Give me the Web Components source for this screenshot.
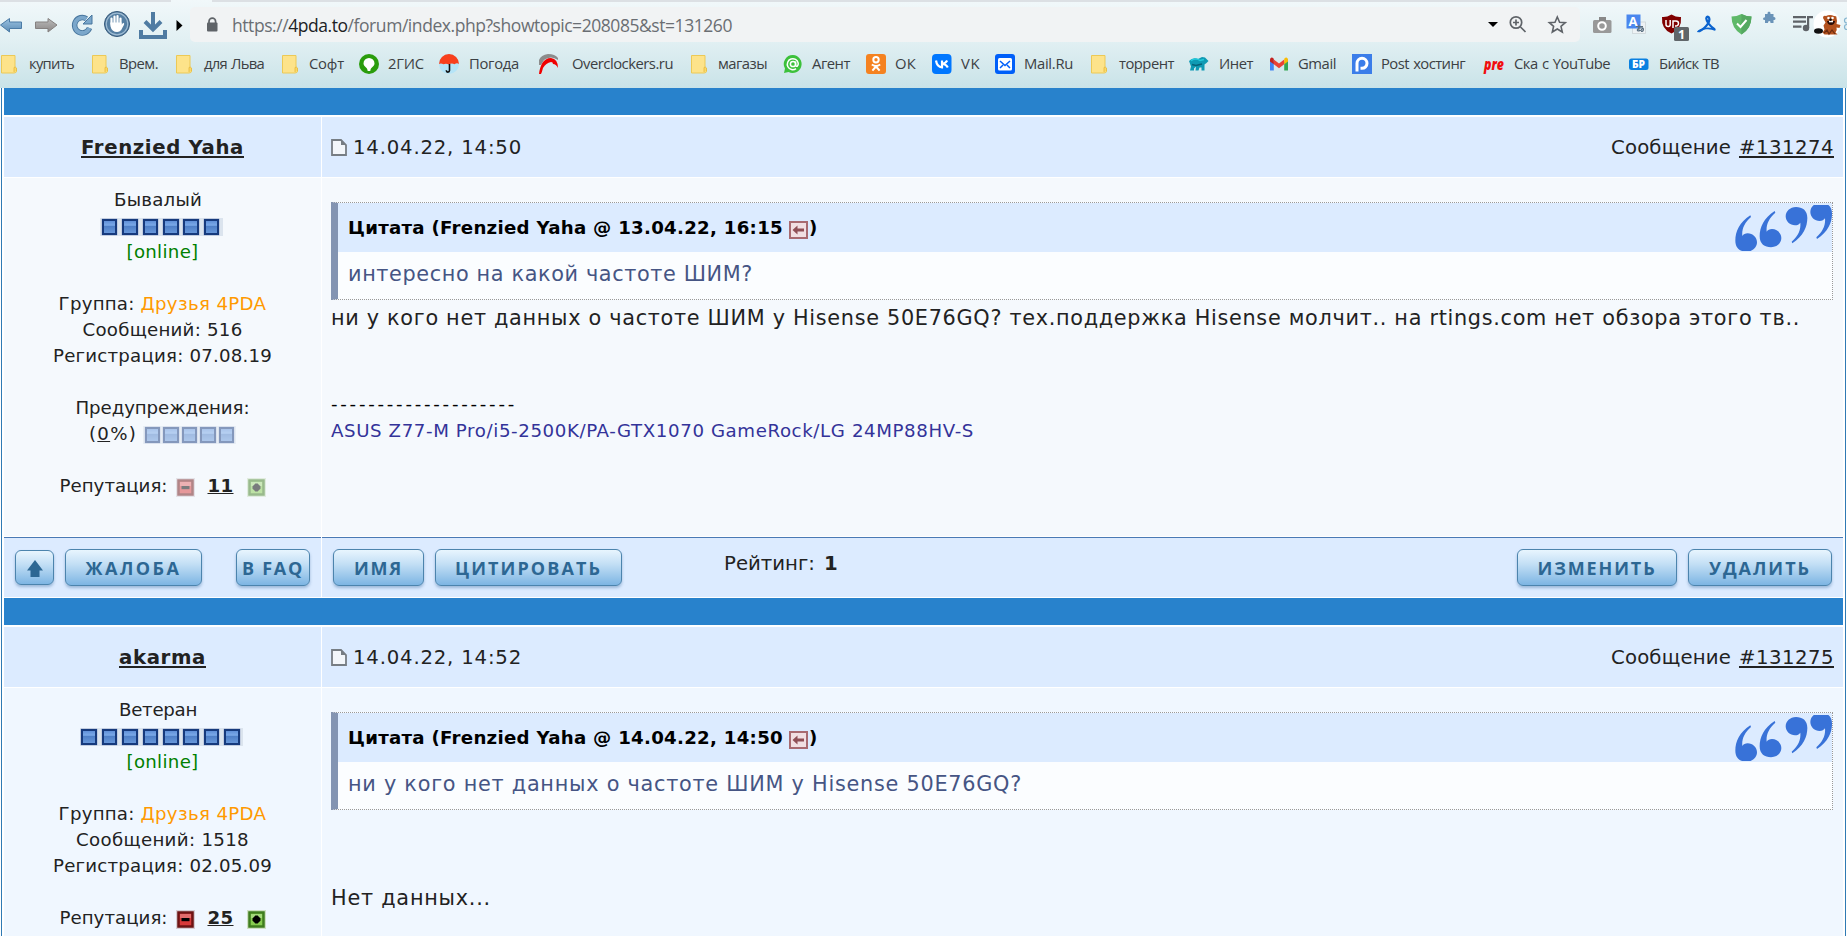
<!DOCTYPE html>
<html lang="ru">
<head>
<meta charset="utf-8">
<title>4PDA</title>
<style>
  html {
    height: 100%;
    overflow: hidden;
  }
  body {
    background-color: #fff;
    color: #222;
    font-family: Verdana, "DejaVu Sans", sans-serif;
    font-size: 18.2px;
    height: 100%;
    margin: 0;
    overflow: hidden;
  }
</style>
</head>
<body>
<browser-bar></browser-bar>
<forum-page>
  <forum-post name="Frenzied Yaha" name-width="163" date="14.04.22, 14:50" number="#131274" rank="Бывалый" rank-width="88" level="6"
    messages="516" messages-width="160" joined="07.08.19" rep="11" warnings faded footer>
    <post-quote label="Цитата (Frenzied Yaha @ 13.04.22, 16:15"><fit-text w="405">интересно на какой частоте ШИМ?</fit-text></post-quote>
    <post-line style="margin-top: 5px"><fit-text w="1469">ни у кого нет данных о частоте ШИМ у Hisense 50E76GQ? тех.поддержка Hisense молчит.. на rtings.com нет обзора этого тв..</fit-text></post-line>
    <post-signature><fit-text w="643">ASUS Z77-M Pro/i5-2500K/PA-GTX1070 GameRock/LG 24MP88HV-S</fit-text></post-signature>
  </forum-post>
  <forum-post name="akarma" name-width="87" date="14.04.22, 14:52" number="#131275" rank="Ветеран" rank-width="78" level="8"
    messages="1518" messages-width="173" joined="02.05.09" rep="25" alt>
    <post-quote label="Цитата (Frenzied Yaha @ 14.04.22, 14:50"><fit-text w="674">ни у кого нет данных о частоте ШИМ у Hisense 50E76GQ?</fit-text></post-quote>
    <post-line style="margin-top: 75px"><fit-text w="160">Нет данных...</fit-text></post-line>
  </forum-post>
</forum-page>

<script>
const folder = `<path d="M2.500 1.500h13.500v14q2 .5 1.600 1.500-.2 2-2.600 2h-12.500z" fill="#fde38a" stroke="#ecc956"/><path d="M15 18v-4.500q1.500-1 2.500.5v3" fill="#fbd766" stroke="#e5b93e" stroke-width=".8"/>`

// 20x20 favicons of the bookmarks bar
const favicons = {
  folder,
  gis: `<circle cx="10" cy="10" r="10" fill="#2a9c0c"/><path d="M10 4a5.500 5.500 0 0 1 5.500 5.500c0 3-4 3.500-4.200 7.500h-2.600C8.500 13 4.500 12.500 4.500 9.500A5.500 5.500 0 0 1 10 4z" fill="#fff"/>`,
  umbrella: `<circle cx="10" cy="10" r="10" fill="#b5e4f7"/><path d="M0 10a10 10 0 0 1 20 0q-2-1.500-4.500.3-3-1.500-5.500.2-3-1.500-5.500-.2-2.500-1.500-4.500-.3z" fill="#f8401d"/><path d="M10.500 10v6.500q0 1.600-1.700 1.600-1.500 0-1.500-1.800" fill="none" stroke="#111" stroke-width="1.600"/>`,
  over: `<path d="M0 6Q2 1 9 0q7 0 10 4v2Q12 1 5 6l-3 5H0z" fill="#8c8c8c"/><path d="M0 20C1 12 4 4 12 4q7 1 7 10-2-4-5-4 0-2-2-2-5 1-8 6-1 4-2 6z" fill="#f00000"/>`,
  agent: `<path d="M10 1a9 9 0 1 1-4.500 17L1 19l1-4.500A9 9 0 0 1 10 1z" fill="#3cc13b"/><g fill="none" stroke="#fff" stroke-width="1.500"><circle cx="10" cy="10" r="2.600"/><path d="M12.600 7.500v3.500q.2 1.800 1.700 1.200 1.200-1 .9-3A5.500 5.500 0 1 0 13 14.700"/></g>`,
  ok: `<rect width="20" height="20" rx="3" fill="#f58220"/><g fill="none" stroke="#fff" stroke-width="2"><circle cx="10" cy="5.800" r="2.700"/><path d="M5.800 10.500q4.200 2.800 8.400 0M10 12.500l-3.600 4.200M10 12.500l3.600 4.200"/></g>`,
  vk: `<rect width="19.500" height="20" rx="4" fill="#07f"/><path d="M4 6.500q1 6.500 6 6.800V6.500M10 10q3.500-.5 5.200-3.500M10 10q4 0 5.800 3.500" fill="none" stroke="#fff" stroke-width="2.200"/>`,
  mail: `<rect width="20" height="20" rx="3" fill="#005ff9"/><rect x="3" y="4" width="14" height="12.500" rx="1.500" fill="#fff"/><path d="M5 7l5 4.500L15 7M5 14l3-3M15 14l-3-3" fill="none" stroke="#005ff9" stroke-width="1.500"/>`,
  bear: `<path d="M0 7q4-4 9-2l4-2 3 .5 3.500 3.500-2 2-2 1.500v6h-3v-3h-2l-1 3h-3l.5-4-2 2v2H1l1-4z" fill="#0f9ab3"/><path d="M2 6.500q5-3 9 0l4-1" fill="none" stroke="#22cbdc" stroke-width="1.500"/><path d="M3 10.500l4 1 6-1.500" stroke="#066278" stroke-width="1.500" fill="none"/>`,
  gmail: `<path d="M1 5v11.500h3.800V8z" fill="#4285f4"/><path d="M19 5v11.500h-3.800V8z" fill="#34a853"/><path d="M4.800 5.500L10 9.500l5.200-4v4.800L10 14.200l-5.200-3.900z" fill="#ea4335"/><path d="M1 6Q1 3 3.200 3.500l1.600 1.300v5.500L1 7.500z" fill="#c5221f"/><path d="M19 6q0-3-2.200-2.500l-1.600 1.300v5.500L19 7.500z" fill="#fbbc04"/>`,
  post: `<rect width="20" height="20" fill="#3b7de9"/><path d="M5 17.500V9.300a5 5 0 1 1 5 5H8.500" fill="none" stroke="#fff" stroke-width="3"/>`,
  pre: `<text x="0" y="16" textLength="20" lengthAdjust="spacingAndGlyphs" font-family="Open Sans, sans-serif" font-size="15" font-weight="800" font-style="italic" fill="#f10d0d">pre</text>`,
  br: `<rect y="4.500" width="19.500" height="11.500" rx="2.500" fill="#0a80e0"/><text x="3" y="14" textLength="13" lengthAdjust="spacingAndGlyphs" font-family="Open Sans, sans-serif" font-size="10.500" font-weight="800" fill="#fff">БР</text>`
}

// icon, left edge of the item, left edge of the label, label width, label
const bookmarks = [
  ['folder', -1, 29, 45, 'купить'],
  ['folder', 90, 119, 39, 'Врем.'],
  ['folder', 174, 204, 60, 'для Льва'],
  ['folder', 280, 309, 35, 'Софт'],
  ['gis', 359, 388, 36, '2ГИС'],
  ['umbrella', 439, 469, 50, 'Погода'],
  ['over', 539, 572, 101, 'Overclockers.ru'],
  ['folder', 689, 718, 49, 'магазы'],
  ['agent', 783, 812, 38, 'Агент'],
  ['ok', 866, 895, 21, 'ОК'],
  ['vk', 932, 961, 19, 'VK'],
  ['mail', 995, 1024, 49, 'Mail.Ru'],
  ['folder', 1089, 1119, 55, 'торрент'],
  ['bear', 1189, 1219, 34, 'Инет'],
  ['gmail', 1269, 1298, 38, 'Gmail'],
  ['post', 1352, 1381, 84, 'Post хостинг'],
  ['pre', 1484, 1514, 96, 'Ска с YouTube'],
  ['br', 1629, 1659, 60, 'Бийск ТВ']
]

class BrowserBar extends HTMLElement {
  constructor() {
    super()
    this.attachShadow({ mode: 'open' })
    this.shadowRoot.innerHTML = `
      <style>
        :host {
          background: linear-gradient(#f1f8fa, #e2f0f3 45%, #c9e3e8);
          color: #3c4043;
          display: block;
          font-family: "Segoe UI", "Open Sans", sans-serif;
          height: 88px;
          overflow: hidden;
        }
        .tabs {
          display: flex;
          height: 2px;
          justify-content: space-between;
        }
        .tabs i {
          background-color: #dce0e4;
          width: 171px;
        }
        .tabs i + i {
          width: 1635px;
        }
        .tools {
          display: flex;
          height: 40px;
        }
        svg {
          display: block;
          flex: none;
          overflow: visible;
        }
        .address {
          background-color: #f1f3f4;
          border-radius: 5px;
          box-sizing: border-box;
          display: flex;
          font-size: 17.500px;
          height: 35px;
          line-height: 36px;
          margin-top: 5px;
          padding-left: 42px;
          position: relative;
          width: 1390px;
        }
        .address svg {
          left: 0;
          position: absolute;
          top: -7px;
        }
        .address span {
          color: #6a6e73;
        }
        .address b {
          color: #202124;
          font-weight: normal;
        }
        .bookmarks {
          display: flex;
          font-size: 14.800px;
          line-height: 19px;
          margin: 12px 0 0 -1px;
          word-spacing: 1px;
        }
        .bookmark {
          display: flex;
          flex: none;
        }
      </style>
      <div class="tabs"><i></i><i></i></div>
      <div class="tools">
        <svg width="190" height="42" viewBox="0 2 190 42">
          <defs>
            <linearGradient id="blue" x1="0" y1="0" x2="0" y2="1"><stop offset="0" stop-color="#9cc3e2"/><stop offset="1" stop-color="#5b8cb5"/></linearGradient>
            <linearGradient id="grey" x1="0" y1="0" x2="0" y2="1"><stop offset="0" stop-color="#bbb"/><stop offset="1" stop-color="#8b8786"/></linearGradient>
          </defs>
          <path d="M.5 25l9-6.500v3.500H21.500v6.500H9.500v3.500z" fill="url(#blue)" stroke="#4b7ba6"/>
          <path d="M57 25l-9-6.500v3.500H35.500v6.500H48v3.500z" fill="url(#grey)" stroke="#858180"/>
          <path d="M86.500 18.800A7.700 7.700 0 1 0 89.500 28" fill="none" stroke="#47759d" stroke-width="5.500"/>
          <path d="M92 15v9h-9z" fill="#7ba7cb" stroke="#47759d"/>
          <path d="M86.500 18.800A7.700 7.700 0 1 0 89.500 28" fill="none" stroke="#7ba7cb" stroke-width="3.800"/>
          <circle cx="117" cy="24" r="12.500" fill="#4d7599" stroke="#365a7c"/>
          <circle cx="117" cy="24" r="10.800" fill="#557fa3" stroke="#9fbcd3" stroke-width="1.200"/>
          <path d="M111.500 24v-5.500M114.500 23v-6.500M117.500 23v-7M120.500 24v-5.500" stroke="#fff" stroke-width="2.200" stroke-linecap="round"/>
          <path d="M110.400 22.500h11.200v2.200l1.600-2q1.600.3.800 2l-2.800 5.300q-1.600 2-4 2-5.500 0-6.800-6z" fill="#fff"/>
          <path d="M153 12v16M145 21.500l8 8 8-8" fill="none" stroke="#4f7ba2" stroke-width="4"/>
          <path d="M141 30v7h24v-7" fill="none" stroke="#4f7ba2" stroke-width="4"/>
          <path d="M176.500 20l6 5.500-6 5.500z" fill="#000"/>
        </svg>
        <div class="address">
          <span><fit-text w="500">https://<b>4pda.to</b>/forum/index.php?showtopic=208085&amp;st=131260</fit-text></span>
          <svg width="1390" height="42" viewBox="190 0 1390 42" fill="none" stroke="#5f6368" stroke-width="1.700">
            <rect x="207" y="22.500" width="10.500" height="9" rx="1" fill="#5f6368" stroke="none"/>
            <path d="M209 23v-1.500a3.300 3.300 0 0 1 6.600 0V23"/>
            <path d="M1488 22h10l-5 5z" fill="#000" stroke="none"/>
            <circle cx="1516" cy="22.500" r="5.700"/>
            <path d="M1520.500 27l5 5M1513 22.500h6M1516 19.500v6"/>
            <path d="M1557.300 17l2.300 5.200 5.700.5-4.300 3.700 1.300 5.600-5-3-5 3 1.300-5.600-4.300-3.700 5.700-.5z" stroke-width="1.600"/>
          </svg>
        </div>
        <svg width="267" height="42" viewBox="1580 2 267 42">
          <rect x="1593" y="20" width="18.500" height="13" rx="1.500" fill="#999"/>
          <rect x="1599" y="17" width="7" height="4" fill="#888"/>
          <circle cx="1602" cy="26" r="3.800" fill="#999" stroke="#fff" stroke-width="2"/>
          <rect x="1632.500" y="22" width="13" height="11.500" fill="#eef2f4" stroke="#cdd4d8" stroke-width=".8"/>
          <rect x="1626.500" y="14.500" width="14" height="14" fill="#4a87ee"/>
          <text x="1628.500" y="26" font-family="Open Sans, sans-serif" font-size="13" font-weight="700" fill="#fff">A</text>
          <path d="M1636 26.500h7M1639 24.500q-.8 5 .6 6.500M1643 27.500q-2 4-5 3.500-2-1.500 1.500-3 4-1 4 1.500 0 2-2.500 2" fill="none" stroke="#5a6f80" stroke-width="1.100"/>
          <path d="M1671.500 14.500q5 3 9.500 2.500 1 12-9.500 16.500-10.500-4.500-9.500-16.500 4.500.5 9.500-2.500z" fill="#800000"/>
          <path d="M1666 20v4.500q0 2 2.200 2 2 0 2-2V20M1673 28v-7h3a2.500 2.500 0 1 1 0 5h-1" fill="none" stroke="#fff" stroke-width="1.500"/>
          <rect x="1674" y="27" width="15" height="14" rx="1.500" fill="#60666a"/>
          <text x="1678" y="39" font-family="Open Sans, sans-serif" font-size="12.500" font-weight="700" fill="#fff">1</text>
          <path d="M1699 31.500q6-3 9-8 2.500-4.500.5-6.500-2-1-2.200 1.500.4 5 8.500 11" fill="none" stroke="#0b63ce" stroke-width="2.300"/>
          <path d="M1697.500 32q3-3 8.500-3.500 5-.5 9.500 1.500" fill="none" stroke="#0b63ce" stroke-width="1.600"/>
          <path d="M1741.500 14q5 2.500 10 2.500 0 12-10 18-10-6-10-18 5 0 10-2.500z" fill="#5fb969"/>
          <path d="M1741.500 14q5 2.500 10 2.500 0 12-10 18z" fill="#55a861"/>
          <path d="M1737 23.500l3.500 3.500 6-7" fill="none" stroke="#fff" stroke-width="2"/>
          <path d="M1765 14h2.500q-.3-2.500 1.500-2.500t1.500 2.500h3v3q2-.3 2 1.500t-2 1.500v3h-3q.2-2-1.200-2t-1.300 2h-3v-3q-2 .2-2-1.300t2-1.500z" fill="#6a93b8"/>
          <g fill="#5f6368"><path d="M1793 16h13v2.200h-13zM1793 20.500h13v2.200h-13zM1793 25.500h8.500v2.200h-8.500z"/><circle cx="1806" cy="28" r="3.200"/><path d="M1807 16h6v2.300h-3.800V28h-2.200z"/></g>
          <circle cx="1827" cy="24" r="13.500" fill="#fff"/>
          <ellipse cx="1818.500" cy="31" rx="4.500" ry="2.700" fill="#111"/>
          <path d="M1823 18q0-3 3-2 4-2 8 0 3-.5 2.500 2 1 3 0 6l4 1-1 3-3-.5q1 3-1 5l2 2h-13l-2-2 2-3-1-4 2-3z" fill="#b3511d"/>
          <path d="M1827 21h8q-.5 4-4 4t-4-4z" fill="#2a0d08"/><path d="M1829 20.500h4v1.800h-4z" fill="#fff"/>
          <circle cx="1828.500" cy="18" r="1.300" fill="#fff"/><circle cx="1832.500" cy="18" r="1.300" fill="#fff"/><circle cx="1830.500" cy="19.700" r="1.300" fill="#111"/>
          <path d="M1824 33l3-3 2 4 3-4 3 4" fill="none" stroke="#6c2b10" stroke-width="1.200"/>
          <g fill="none" stroke="#83b4cf" stroke-width="1.200"><circle cx="1847" cy="20.500" r="2.500"/><circle cx="1847" cy="27" r="2.500"/></g>
        </svg>
      </div>
      <div class="bookmarks">
        ${bookmarks.map(([icon, left, textLeft, width, label], i) => `
          <div class="bookmark" style="width: ${(bookmarks[i + 1] || [0, 1847])[1] - left}px; gap: ${textLeft - left - 20}px">
            <svg width="20" height="20">${favicons[icon]}</svg>
            <fit-text w="${width}">${label}</fit-text>
          </div>`).join('')}
      </div>
    `
  }
}

class ForumPage extends HTMLElement {
  constructor() {
    super()
    this.attachShadow({ mode: 'open' })
    this.shadowRoot.innerHTML = `
      <style>
        :host {
          border: solid #2f7ab4;
          border-width: 0 1px;
          display: block;
          margin: 0 1px;
          padding: 0 2px;
        }
      </style>
      <slot></slot>
    `
  }
}

// row of small blue squares used for rank and warnings
class LevelBar extends HTMLElement {
  constructor() {
    super()
    this.attachShadow({ mode: 'open' })
    const pitch = this.getAttribute('pitch')
    this.shadowRoot.innerHTML = `
      <style>
        :host {
          background-color: #dbe4ee;
          display: inline-flex;
          height: 18.500px;
          vertical-align: middle;
        }
        i {
          align-items: center;
          display: flex;
          padding-left: 1.500px;
          width: ${pitch - 1.5}px;
        }
        i::before {
          background: linear-gradient(#5f8fd8, #7aa9e8 35%, #4f80c8 45%, #6797da);
          border: 2.500px solid #163a7d;
          box-shadow: 0 0 1px #46619a;
          box-sizing: border-box;
          content: "";
          height: 15.500px;
          width: 15.500px;
        }
      </style>
      ${'<i></i>'.repeat(this.getAttribute('count'))}
    `
  }
}

class RepButton extends HTMLElement {
  constructor() {
    super()
    this.attachShadow({ mode: 'open' })
    const plus = this.hasAttribute('plus')
    const colors = plus ? ['#3f7d1e', '#86cc4f', '#cfe0c4'] : ['#6d1414', '#d93a3a', '#d5cdd3']
    this.shadowRoot.innerHTML = `
      <style>
        :host {
          display: inline-block;
          vertical-align: middle;
        }
        svg {
          display: block;
        }
      </style>
      <svg width="19" height="19">
        <rect width="19" height="19" fill="${colors[2]}"/>
        <rect x="2.500" y="2.500" width="14" height="14" fill="${colors[1]}" stroke="${colors[0]}" stroke-width="2.500"/>
        <rect x="4" y="4" width="11" height="4" fill="#fff" opacity=".25"/>
        ${plus ? '<path d="M8.300 5.500h2.400l1.300 1.500 1.500 1.300v2.400L12 12l-1.300 1.500H8.300L7 12l-1.500-1.300V8.300L7 7z"/>' : '<path d="M5.500 8h8v3.200h-8z"/>'}
      </svg>
    `
  }
}

class ForumButton extends HTMLElement {
  constructor() {
    super()
    this.attachShadow({ mode: 'open' })
    this.shadowRoot.innerHTML = `
      <style>
        :host {
          align-items: center;
          background: linear-gradient(#e8f5fe, #c3dff5 40%, #7db5e3);
          border: 1px solid #4c84ad;
          border-radius: 6px;
          box-shadow: 0 2px 3px rgba(60, 110, 160, .4);
          box-sizing: border-box;
          color: #2d6793;
          display: flex;
          flex: none;
          font: bold 18px "Open Sans", sans-serif;
          height: 37px;
          justify-content: center;
        }
      </style>
      <slot></slot>
    `
  }
}

class PostQuote extends HTMLElement {
  constructor() {
    super()
    this.attachShadow({ mode: 'open' })
    this.shadowRoot.innerHTML = `
      <style>
        :host {
          background-color: #fbfdff;
          border: 1px dotted #999;
          border-left: 7px solid #8394b2;
          box-sizing: border-box;
          display: block;
          height: 98px;
        }
        .title {
          align-items: center;
          background-color: #dcebff;
          color: #000;
          display: flex;
          font-weight: bold;
          height: 49px;
          padding-left: 10px;
        }
        .title svg {
          margin: 4px 1px 0 6px;
        }
        .title .marks {
          margin: 2px 0 1px auto;
        }
        .text {
          color: #465584;
          font-size: 20.800px;
          line-height: 45px;
          padding-left: 10px;
        }
      </style>
      <div class="title">
        <fit-text w="435">${this.getAttribute('label')}</fit-text>
        <svg width="19" height="18"><rect x="1" y="1" width="17" height="16" fill="#f1dfe2" stroke="#a86a70" stroke-width="2"/><path d="M3.500 9l5-4.500V7.500H15v3H8.500v3z" fill="#8f4f55"/></svg>
        <span>)</span>
        <svg class="marks" width="97" height="46" viewBox="857 255 291 138" fill="#3872d8">
          <defs><path id="mark" d="M903 286C870 308 858 335 858 362C858 385 873 395 892 395C910 395 923 382 923 367C923 352 910 340 895 340C888 340 882 343 879 348C877 328 885 308 905 291Z"/></defs>
          <use href="#mark"/>
          <use href="#mark" transform="translate(73 -13)"/>
          <use href="#mark" transform="translate(1932 656) rotate(180)"/>
          <use href="#mark" transform="translate(2006 643) rotate(180)"/>
        </svg>
      </div>
      <div class="text"><slot></slot></div>
    `
  }
}

class PostLine extends HTMLElement {
  constructor() {
    super()
    this.attachShadow({ mode: 'open' })
    this.shadowRoot.innerHTML = `
      <style>
        :host {
          display: block;
          font-size: 20.800px;
          line-height: 26px;
        }
      </style>
      <slot></slot>
    `
  }
}

class PostSignature extends HTMLElement {
  constructor() {
    super()
    this.attachShadow({ mode: 'open' })
    this.shadowRoot.innerHTML = `
      <style>
        :host {
          color: #333399;
          display: block;
          line-height: 27px;
          margin-top: 59px;
        }
        div {
          color: #000;
        }
      </style>
      <div><fit-text w="186">--------------------</fit-text></div>
      <slot></slot>
    `
  }
}

class ForumPost extends HTMLElement {
  constructor() {
    super()
    this.attachShadow({ mode: 'open' })
    const get = name => this.getAttribute(name)
    const alt = this.hasAttribute('alt')
    const faded = this.hasAttribute('faded') ? 'faded' : ''
    const warnings = `
      <div><fit-text w="174">Предупреждения:</fit-text></div>
      <div><fit-text w="48">(<u>0</u>%)</fit-text><level-bar class="faded warn" count="5" pitch="18.6"></level-bar></div>
      <br>`
    const footer = `
      <div class="footer">
        <div class="left">
          <forum-button style="width: 39px; height: 35px; margin-right: 11px"><svg width="16" height="18"><path d="M8 1l8 10.500h-3.500V18h-9v-6.500H0z" fill="#2d6793"/></svg></forum-button>
          <forum-button style="width: 137px"><fit-text w="96">ЖАЛОБА</fit-text></forum-button>
          <forum-button style="width: 74px; margin-left: auto"><fit-text w="62">В FAQ</fit-text></forum-button>
        </div>
        <div class="right">
          <forum-button style="width: 91px"><fit-text w="49">ИМЯ</fit-text></forum-button>
          <forum-button style="width: 187px; margin-left: 11px"><fit-text w="147">ЦИТИРОВАТЬ</fit-text></forum-button>
          <div class="rating"><fit-text w="91">Рейтинг:</fit-text><b>1</b></div>
          <forum-button style="width: 160px; margin-left: auto"><fit-text w="119">ИЗМЕНИТЬ</fit-text></forum-button>
          <forum-button style="width: 144px; margin-left: 11px"><fit-text w="102">УДАЛИТЬ</fit-text></forum-button>
        </div>
      </div>`
    this.shadowRoot.innerHTML = `
      <style>
        :host {
          display: block;
        }
        .bar {
          background-color: #2882cc;
          height: 27px;
          margin-bottom: 2px;
        }
        .head, .body, .footer {
          display: grid;
          gap: 1px;
          grid-template-columns: 317px 1fr;
          margin-bottom: 1px;
        }
        .head > div {
          align-items: center;
          background-color: #dcebff;
          box-sizing: border-box;
          display: flex;
          font-size: 19.700px;
          height: 60px;
          padding-top: 1px;
        }
        .head .name {
          font-weight: bold;
          justify-content: center;
        }
        .head .info {
          padding-left: 9px;
          padding-right: 9px;
        }
        .info svg {
          margin-right: 6px;
        }
        .info .number {
          margin-left: auto;
        }
        .head u {
          text-decoration-thickness: 2px;
          text-underline-offset: 2px;
        }
        .number u {
          margin-left: 8px;
        }
        .body {
          margin-bottom: ${alt ? 0 : 1}px;
        }
        .body > div {
          background-color: ${alt ? '#f0f7ff' : '#f5f9fd'};
          box-sizing: border-box;
          height: ${alt ? 248 : 358}px;
        }
        .user {
          line-height: 26px;
          padding-top: 9px;
          text-align: center;
          white-space: nowrap;
        }
        .user > div {
          height: 26px;
        }
        .rank {
          padding-right: 9px;
        }
        .level {
          padding-right: 2px;
        }
        .user .online {
          color: #008000;
        }
        .user .group {
          color: #ff9900;
        }
        .faded {
          opacity: .5;
        }
        .warn {
          margin-left: 6px;
        }
        .rep b {
          display: inline-block;
          margin: 0 13px;
        }
        rep-button:first-of-type {
          margin-left: 8px;
        }
        .post {
          padding: 24px 10px 0 9px;
        }
        .footer > div {
          background-color: #dcebff;
          border-top: 1px solid #4a7ab5;
          box-sizing: border-box;
          display: flex;
          height: 60px;
          padding: 11px 11px 0;
        }
        .footer .left forum-button:first-child {
          margin-top: 1px;
        }
        .rating {
          font-size: 19.700px;
          line-height: 29px;
          margin-left: 102px;
        }
        .rating b {
          margin-left: 9px;
        }
      </style>
      <div class="bar"></div>
      <div class="head">
        <div class="name"><u><fit-text w="${get('name-width')}">${get('name')}</fit-text></u></div>
        <div class="info">
          <svg width="16" height="17"><path d="M1 1h9l5 5v10H1z" fill="#f3f6fa" stroke="#777d83" stroke-width="1.800"/><path d="M10 1v5h5z" fill="#777d83"/></svg>
          <fit-text w="169">${get('date')}</fit-text>
          <div class="number"><fit-text w="120">Сообщение</fit-text><u><fit-text w="95">${get('number')}</fit-text></u></div>
        </div>
      </div>
      <div class="body">
        <div class="user">
          <div class="rank"><fit-text w="${get('rank-width')}">${get('rank')}</fit-text></div>
          <div class="level"><level-bar count="${get('level')}" pitch="20.4"></level-bar></div>
          <div class="online"><fit-text w="72">[online]</fit-text></div>
          <br>
          <div><fit-text w="76">Группа:</fit-text> <fit-text class="group" w="126">Друзья 4PDA</fit-text></div>
          <div><fit-text w="${get('messages-width')}">Сообщений: ${get('messages')}</fit-text></div>
          <div><fit-text w="219">Регистрация: ${get('joined')}</fit-text></div>
          <br>
          ${this.hasAttribute('warnings') ? warnings : ''}
          <div class="rep"><fit-text w="108">Репутация:</fit-text><rep-button class="${faded}"></rep-button><b><u><fit-text w="26">${get('rep')}</fit-text></u></b><rep-button plus class="${faded}"></rep-button></div>
        </div>
        <div class="post"><slot></slot></div>
      </div>
      ${this.hasAttribute('footer') ? footer : ''}
    `
  }
}

// spreads its letters so that the text takes the width in the w attribute
class FitText extends HTMLElement {
  constructor() {
    super()
    this.attachShadow({ mode: 'open' })
    this.shadowRoot.innerHTML = `
      <style>
        :host {
          display: inline-block;
          text-decoration: inherit;
          white-space: nowrap;
        }
      </style>
      <slot></slot>
    `
  }

  connectedCallback() {
    const natural = this.getBoundingClientRect().width
    const spacing = (this.getAttribute('w') - natural) / this.textContent.length
    this.style.letterSpacing = spacing + 'px'
  }
}

window.customElements.define('browser-bar', BrowserBar)
window.customElements.define('forum-page', ForumPage)
window.customElements.define('level-bar', LevelBar)
window.customElements.define('rep-button', RepButton)
window.customElements.define('forum-button', ForumButton)
window.customElements.define('post-quote', PostQuote)
window.customElements.define('post-line', PostLine)
window.customElements.define('post-signature', PostSignature)
window.customElements.define('forum-post', ForumPost)
// last, as it measures text inside all of the others
window.customElements.define('fit-text', FitText)
</script>
</body>
</html>
